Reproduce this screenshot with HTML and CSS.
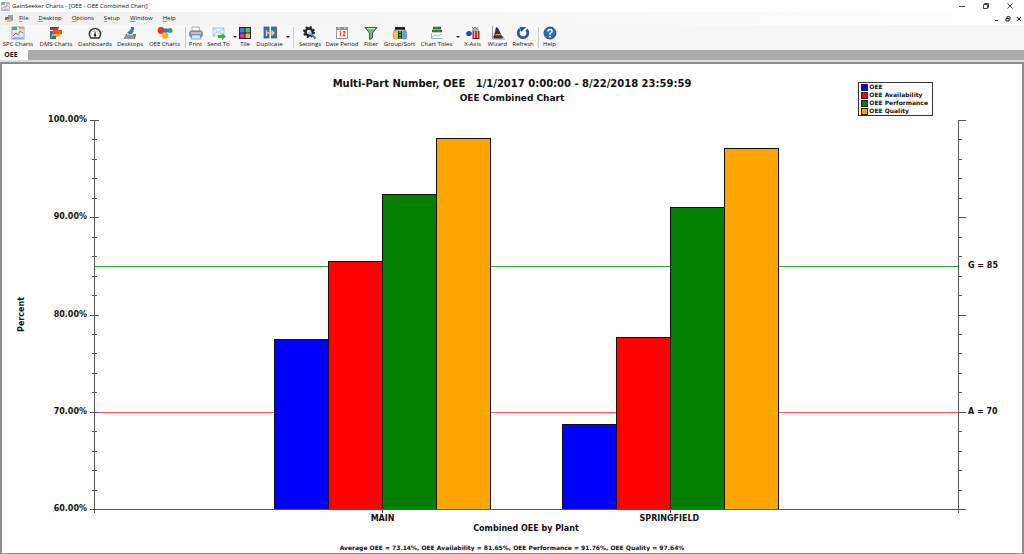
FILE: index.html
```html
<!DOCTYPE html>
<html lang="en">
<head>
<meta charset="utf-8">
<title>GainSeeker Charts - [OEE - OEE Combined Chart]</title>
<link rel="stylesheet" href="styles.css">
</head>
<body>
<svg class="defs" aria-hidden="true">
  <symbol id="i-chart" viewBox="0 0 14 14"><rect x="1" y="1" width="12" height="12" fill="#eaf3fa" stroke="#8aa9c4"/><path d="M1 4h12M1 7h12M1 10h12M5 1v12M9 1v12" stroke="#bcd4e8" stroke-width=".6"/><path d="M1 1h5v3H1z" fill="#57a773"/><path d="M8 1h5v2H8z" fill="#ef9a4a"/><path d="M2 10l3-3 2 2 2-4 3 2" fill="none" stroke="#e2572b"/><path d="M2 12h10" stroke="#5b8fc7"/></symbol>
  <symbol id="i-dms" viewBox="0 0 14 14"><path d="M1 1h9l-1 3H1z" fill="#c83b2d"/><path d="M4 4h9v4H3z" fill="#e8582b"/><path d="M1 5h3l-1 8H1z" fill="#2f6fb8"/><path d="M3 8h9l-1 2-4 1v2H2z" fill="#f2a72e"/><path d="M3 10h4v3H2z" fill="#2f6fb8"/><path d="M1 1h7l-3 2H1z" fill="#8f2932"/></symbol>
  <symbol id="i-dash" viewBox="0 0 14 14"><path d="M3 12a5.600 5.600 0 1 1 8 0z" fill="#fff" stroke="#333" stroke-width="1.500"/><path d="M6.200 9L7 4l.9 5z" fill="#222"/><circle cx="7" cy="9.500" r="1.200" fill="#222"/><path d="M3.200 8h1M9.800 8h1M4.500 5l.7.7M9.500 5l-.7.7" stroke="#555" stroke-width=".7"/></symbol>
  <symbol id="i-desk" viewBox="0 0 14 14"><path d="M3 8h10l-1 5H1z" fill="#666"/><path d="M2.500 10h9M2 12h9" stroke="#ddd" stroke-width=".8"/><path d="M4 7l4-4 3 2-3 4z" fill="#4a7e8e"/><path d="M8 1h3v3H8z" fill="#3b6fc4"/><path d="M4 8h6v1H4z" fill="#c9d3d6"/></symbol>
  <symbol id="i-oee" viewBox="0 0 16 14"><circle cx="4" cy="4.500" r="3.400" fill="#e0362c"/><circle cx="8" cy="9.500" r="3.300" fill="#f3b02b"/><circle cx="13" cy="4.500" r="2.500" fill="#3b9b6b"/><circle cx="9" cy="4.500" r="2.300" fill="#2f78c4"/></symbol>
  <symbol id="i-print" viewBox="0 0 14 14"><path d="M3 1h7l1 4H3z" fill="#fff" stroke="#888" stroke-width=".7"/><rect x=".7" y="5" width="12.600" height="6" rx="1.500" fill="#929baa" stroke="#626b78" stroke-width=".7"/><path d="M2 7h10" stroke="#dbe2ec"/><path d="M3 9h8l1 4H2z" fill="#d8ebfb" stroke="#6d92b5" stroke-width=".7"/></symbol>
  <symbol id="i-send" viewBox="0 0 14 14"><rect x="1" y="2" width="11" height="8" fill="#e5f3fb" stroke="#9cb7ca" stroke-width=".7"/><path d="M1 2l5.500 4.500L12 2M1 10l4-4M12 10L8 6" fill="none" stroke="#8aaac0" stroke-width=".6"/><path d="M6 9h4V7l4 3.500-4 3.500v-2H6z" fill="#36b24a"/></symbol>
  <symbol id="i-tile" viewBox="0 0 14 14"><rect x="1" y="1" width="12" height="12" fill="#222"/><rect x="2" y="2" width="4.500" height="4.500" fill="#3f7fd8"/><rect x="7.500" y="2" width="4.500" height="4.500" fill="#57c83c"/><rect x="2" y="7.500" width="4.500" height="4.500" fill="#e124c4"/><rect x="7.500" y="7.500" width="4.500" height="4.500" fill="#f0b928"/></symbol>
  <symbol id="i-dup" viewBox="0 0 14 14"><rect x="1" y="1" width="5" height="11" fill="#3974b9" stroke="#264e7e" stroke-width=".7"/><rect x="8.500" y="1" width="5" height="11" fill="#3974b9" stroke="#264e7e" stroke-width=".7"/><path d="M3.500 4v6M3.500 7H11M8.500 4.500L11 7 8.500 9.500" fill="none" stroke="#f2d56a" stroke-width="1.400"/></symbol>
  <symbol id="i-set" viewBox="0 0 14 14"><circle cx="6" cy="6" r="3.500" fill="none" stroke="#222" stroke-width="2.500"/><circle cx="6" cy="6" r="5" fill="none" stroke="#222" stroke-width="2" stroke-dasharray="2 1.930"/><path d="M7 7l5.500 5.500" stroke="#4d7ba8" stroke-width="2.400"/><circle cx="7" cy="7" r="1.800" fill="#a9c4dc"/></symbol>
  <symbol id="i-date" viewBox="0 0 14 14"><rect x="1.500" y="1.500" width="11" height="11" fill="#fff" stroke="#929baa"/><path d="M1 1h12v3H1z" fill="#8793a5"/><path d="M4 0v3M10 0v3" stroke="#e4e9ef"/><path d="M4.500 6l1-.6V10M8 6.300q2-1.700 2 .2Q10 7.600 8 9.600h2.400" fill="none" stroke="#e05a2a" stroke-width="1.300"/></symbol>
  <symbol id="i-filter" viewBox="0 0 14 14"><path d="M1 1.500h12L8.500 7v5l-3 1.500V7z" fill="#76b287" stroke="#3d5d48"/><path d="M3 2.500h8" stroke="#d6eadb"/></symbol>
  <symbol id="i-group" viewBox="0 0 14 14"><path d="M2 1h10v3H2z" fill="#222"/><path d="M1 4h12" stroke="#777"/><rect x=".5" y="5" width="4" height="8" rx="1" fill="#efc74c" stroke="#8e8261" stroke-width=".5"/><rect x="5" y="5" width="4" height="8" fill="#293e2d"/><path d="M6 6h2M6 9h2M6 12h2" stroke="#54c655" stroke-width="1.500"/><rect x="9.500" y="5" width="4" height="8" rx="1" fill="#5da4dd" stroke="#506e87" stroke-width=".5"/></symbol>
  <symbol id="i-titles" viewBox="0 0 14 14"><path d="M3 2h8M2 5h10" stroke="#344f3d" stroke-width="2.400"/><path d="M4 2h6M3 5h8" stroke="#4bad65" stroke-width="1.200" stroke-dasharray="2 .5"/><path d="M1.500 7.500v5h11" fill="none" stroke="#789bb9" stroke-width=".8"/><path d="M2 11l3-2 3 1 4-2" fill="none" stroke="#9aaebd" stroke-width=".8"/></symbol>
  <symbol id="i-axis" viewBox="0 0 14 14"><path d="M6 1l1.500 2L9 1l1.500 2L12 1M6 4h7" fill="none" stroke="#444" stroke-width=".8"/><circle cx="2.800" cy="7.500" r="2.600" fill="#164fc0"/><path d="M4 5l2.500 2.500L4 10z" fill="#164fc0"/><path d="M7.400 5v7M10 5v7M12.600 5v7" stroke="#b92424" stroke-width="1.800"/><path d="M6.500 12.500h7" stroke="#5b2020"/></symbol>
  <symbol id="i-wiz" viewBox="0 0 14 14"><path d="M1.500 0v13H14" fill="none" stroke="#999"/><path d="M5 1l2 1 4 8H3z" fill="#30304a"/><path d="M2 10q5-2 11 1l-2 1.500H3z" fill="#383352"/><path d="M4.500 8.600h5.400" stroke="#e6a52e" stroke-width="1.300"/></symbol>
  <symbol id="i-refresh" viewBox="0 0 14 14"><path d="M4 3.200a4.800 4.800 0 1 0 6.500.4" fill="none" stroke="#2b57a5" stroke-width="2.800"/><path d="M3.500 1h6.500L5.500 6z" fill="#2b57a5"/></symbol>
  <symbol id="i-help" viewBox="0 0 14 14"><circle cx="7" cy="7" r="6" fill="#2e6bb2" stroke="#24528a"/><path d="M4.800 5.500Q5 3.500 7 3.500t2.200 1.800Q9.200 6.500 7 7.500v1.300" fill="none" stroke="#fff" stroke-width="1.500"/><circle cx="7" cy="10.600" r=".9" fill="#fff"/></symbol>
</svg>

<header class="titlebar">
  <svg class="app-icon"><use href="#i-chart"/></svg>
  <span class="title">GainSeeker Charts - [OEE - OEE Combined Chart]</span>
  <div class="win-buttons">
    <button aria-label="Minimize"><svg viewBox="0 0 8 8"><path d="M1 4.500h6"/></svg></button>
    <button aria-label="Restore"><svg viewBox="0 0 8 8"><path d="M1.500 2.500h4v4h-4zM2.500 2.500v-1h4v4h-1"/></svg></button>
    <button aria-label="Close"><svg viewBox="0 0 8 8"><path d="M1.500 1.500l5 5M6.500 1.500l-5 5"/></svg></button>
  </div>
</header>

<nav class="menubar" aria-label="Main menu">
  <svg class="doc-icon" viewBox="0 0 8 8"><path d="M3 0h5v6H3z" fill="#7ca6d8"/><path d="M0 2h4v3H0z" fill="#d9532c"/><path d="M2 4h4v3H2z" fill="#f1b83b"/></svg>
  <button><u>F</u>ile</button><button><u>D</u>esktop</button><button><u>O</u>ptions</button><button><u>S</u>etup</button><button><u>W</u>indow</button><button><u>H</u>elp</button>
  <div class="doc-buttons">
    <button aria-label="Minimize document"><svg viewBox="0 0 6 6"><path d="M1 4.500h3"/></svg></button>
    <button aria-label="Restore document"><svg viewBox="0 0 6 6"><path d="M1 2.500h3v2.500H1zM2 2V.800h3v2.700H4.500"/></svg></button>
    <button aria-label="Close document"><svg viewBox="0 0 6 6"><path d="M1 1l4 4M5 1L1 5"/></svg></button>
  </div>
</nav>

<div class="toolbar" role="toolbar" aria-label="Chart tools">
  <button><svg><use href="#i-chart"/></svg>SPC Charts</button>
  <button><svg><use href="#i-dms"/></svg>DMS Charts</button>
  <button><svg><use href="#i-dash"/></svg>Dashboards</button>
  <button><svg><use href="#i-desk"/></svg>Desktops</button>
  <button><svg class="wide"><use href="#i-oee"/></svg>OEE Charts</button>
  <i class="sep"></i>
  <button><svg><use href="#i-print"/></svg>Print</button>
  <button><svg><use href="#i-send"/></svg>Send To</button>
  <button class="more" aria-label="Send To options"></button>
  <button><svg><use href="#i-tile"/></svg>Tile</button>
  <button><svg><use href="#i-dup"/></svg>Duplicate</button>
  <button class="more" aria-label="Duplicate options"></button>
  <i class="sep"></i>
  <button><svg><use href="#i-set"/></svg>Settings</button>
  <button><svg><use href="#i-date"/></svg>Date Period</button>
  <button><svg><use href="#i-filter"/></svg>Filter</button>
  <button><svg><use href="#i-group"/></svg>Group/Sort</button>
  <button><svg><use href="#i-titles"/></svg>Chart Titles</button>
  <button class="more" aria-label="Chart Titles options"></button>
  <button><svg><use href="#i-axis"/></svg>X-Axis</button>
  <button><svg><use href="#i-wiz"/></svg>Wizard</button>
  <button><svg><use href="#i-refresh"/></svg>Refresh</button>
  <i class="sep"></i>
  <button><svg><use href="#i-help"/></svg>Help</button>
</div>

<div class="tabs"><button class="tab">OEE</button></div>

<main class="panel">
  <h1 class="chart-title">Multi-Part Number, OEE&nbsp;&nbsp; 1/1/2017 0:00:00 - 8/22/2018 23:59:59</h1>
  <h2 class="chart-subtitle">OEE Combined Chart</h2>
  <ul class="legend">
    <li><i class="key blue"></i>OEE</li>
    <li><i class="key red"></i>OEE Availability</li>
    <li><i class="key green"></i>OEE Performance</li>
    <li><i class="key orange"></i>OEE Quality</li>
  </ul>
  <div class="chart">
    <div class="y-title"><span>Percent</span></div>
    <div class="y-labels"><span>100.00%</span><span>90.00%</span><span>80.00%</span><span>70.00%</span><span>60.00%</span></div>
    <svg class="plot" id="plot" role="img" aria-label="OEE by plant"></svg>
    <div class="limits"><span>G = 85</span><span>A = 70</span></div>
    <div class="x-labels"><span>MAIN</span><span>SPRINGFIELD</span></div>
    <div class="x-title">Combined OEE by Plant</div>
  </div>
  <p class="summary">Average OEE = 73.14%, OEE Availability = 81.65%, OEE Performance = 91.76%, OEE Quality = 97.64%</p>
</main>
<script src="chart.js"></script>
</body>
</html>
```

FILE: styles.css
```css
* { box-sizing: border-box; }
body {
  margin: 0;
  height: 100vh;
  display: flex;
  flex-direction: column;
  background: #fff;
  color: #111;
  font: 6px/9px "Open Sans", sans-serif;
}
button {
  border: 0;
  padding: 0;
  background: none;
  color: inherit;
  font: inherit;
  white-space: nowrap;
}
.defs { display: none; }

.titlebar { display: flex; align-items: center; height: 12px; }
.app-icon { width: 9px; height: 9px; margin: 0 2px 0 1px; }
.win-buttons, .doc-buttons { display: flex; margin-left: auto; }
.win-buttons { gap: 16px; padding-right: 10px; }
.win-buttons svg { display: block; width: 8px; height: 8px; fill: none; stroke: #444; stroke-width: 1; }

.menubar {
  display: flex;
  align-items: center;
  gap: 10px;
  height: 13px;
  padding-left: 5px;
  background: linear-gradient(to right, #f0f0f0, #fff);
}
.menubar u { text-underline-offset: 1px; text-decoration-thickness: 1px; text-decoration-color: #999; }
.doc-icon { width: 8px; height: 8px; margin-right: -4px; }
.doc-buttons { gap: 5px; padding-right: 2px; }
.doc-buttons svg { display: block; width: 6px; height: 6px; fill: none; stroke: #222; }

.toolbar {
  display: grid;
  grid-template-columns: 36px 40px 38px 32px 37px 4px 17px 29px 4px 16px 33px 4px 6px 28px 36px 22px 35px 39px 4px 25px 25px 26px 5px 17px;
  height: 25px;
  padding-top: 1px;
  background: #f7f7f7;
}
.toolbar button { display: flex; flex-direction: column; align-items: center; min-width: 0; }
.toolbar svg { flex: none; width: 14px; height: 14px; }
.toolbar svg.wide { width: 16px; }
.toolbar .sep { width: 1px; height: 21px; margin: 1px auto; background: #ccc; }
.toolbar .more::after {
  content: "";
  margin-top: 10px;
  border: 2px solid transparent;
  border-top-color: #222;
  border-bottom: 0;
}

.tabs { display: flex; height: 12px; background: #ababab; border-bottom: 2px solid #ddd; }
.tab { width: 28px; padding-right: 6px; background: #fff; font: bold 7px/10px "Open Sans", sans-serif; }

.panel {
  position: relative;
  flex: 1;
  display: flex;
  flex-direction: column;
  border: solid #8c8c8c;
  border-width: 2px 2px 1px;
  font-family: "DejaVu Sans", sans-serif;
  font-weight: bold;
  text-align: center;
}
.chart-title, .chart-subtitle { margin: 0; line-height: 14px; }
.chart-title { padding-top: 13px; font-size: 10px; }
.chart-subtitle { padding-bottom: 15px; font-size: 9px; }
.legend {
  position: absolute;
  top: 18px;
  right: 89px;
  margin: 0;
  padding: 0 4px 0 2px;
  border: 1px solid #333;
  background: #fff;
  list-style: none;
  font-size: 6px;
  line-height: 8px;
}
.legend li { display: flex; align-items: center; gap: 1px; }
.key { width: 7px; height: 7px; border: 1px solid #222; }
.blue { background: #00f; }
.red { background: #f00; }
.green { background: #008000; }
.orange { background: #ffa500; }

.chart {
  flex: 1;
  display: grid;
  grid-template: 1fr 15px 10px / 40px 45px 1fr 64px;
  font-size: 8px;
  line-height: 10px;
}
.y-title { display: flex; align-items: center; justify-content: center; }
.y-title span { writing-mode: vertical-rl; transform: rotate(180deg); }
.y-labels { display: flex; flex-direction: column; justify-content: space-between; text-align: right; }
.y-labels span, .limits span { height: 0; line-height: 0; }
.plot { width: calc(100% - 7px); height: 100%; margin-left: 7px; overflow: visible; shape-rendering: crispEdges; }
.plot .axis { stroke: #555; }
.plot .g-limit { stroke: #37a037; }
.plot .a-limit { stroke: #ff5555; }
.plot .bar { stroke: #111; }
.limits { display: grid; grid-template-rows: 375fr 375fr 250fr; padding-left: 10px; text-align: left; }
.limits span { align-self: end; }
.x-labels, .x-title { grid-column: 3; margin-left: 7px; white-space: nowrap; }
.x-labels { display: grid; grid-template-columns: 1fr 1fr; padding: 5px calc(100% / 6) 0; }
.summary { margin: 9px 0 1px; font-size: 6px; line-height: 9px; }
```

FILE: chart.js
```js
const plot = document.getElementById("plot");
const MIN = 60, MAX = 100;
const groups = [[77.5, 85.5, 92.4, 98.1], [68.7, 77.7, 91.1, 97.1]];
const colors = ["#0000ff", "#ff0000", "#008000", "#ffa500"];

function add(name, attrs) {
  const el = document.createElementNS("http://www.w3.org/2000/svg", name);
  for (const key in attrs) el.setAttribute(key, attrs[key]);
  plot.append(el);
}
function draw() {
  plot.replaceChildren();
  const { width, height } = plot.getBoundingClientRect();
  const w = Math.round(width), h = Math.round(height);
  const y = v => Math.round(h * (MAX - v) / (MAX - MIN)) + 0.5;
  const x = f => Math.round(w * f) + 0.5;
  const line = (x1, y1, x2, y2, cls) => add("line", { x1, y1, x2, y2, class: cls });

  line(0, y(85), w, y(85), "g-limit");
  line(0, y(70), w, y(70), "a-limit");
  groups.forEach((values, g) => values.forEach((v, i) => {
    const start = (g + 1) / 3 + (i - 2) / 16;
    add("rect", { x: x(start), y: y(v), width: x(start + 1 / 16) - x(start), height: y(MIN) - y(v), fill: colors[i], class: "bar" });
  }));
  line(x(0), 0, x(0), h + 4, "axis");
  line(x(1), 0, x(1), h + 4, "axis");
  line(0, y(MIN), w, y(MIN), "axis");
  for (let v = MIN; v <= MAX; v += 2) {
    const major = v % 10 === 0;
    line(major ? -4 : -2, y(v), major ? 5 : 3, y(v), "axis");
    line(w, y(v), w + (major ? 8 : 4), y(v), "axis");
  }
  [1 / 3, 2 / 3].forEach(f => line(x(f), h, x(f), h + 4, "axis"));
}
draw();
window.addEventListener("resize", draw);
```
